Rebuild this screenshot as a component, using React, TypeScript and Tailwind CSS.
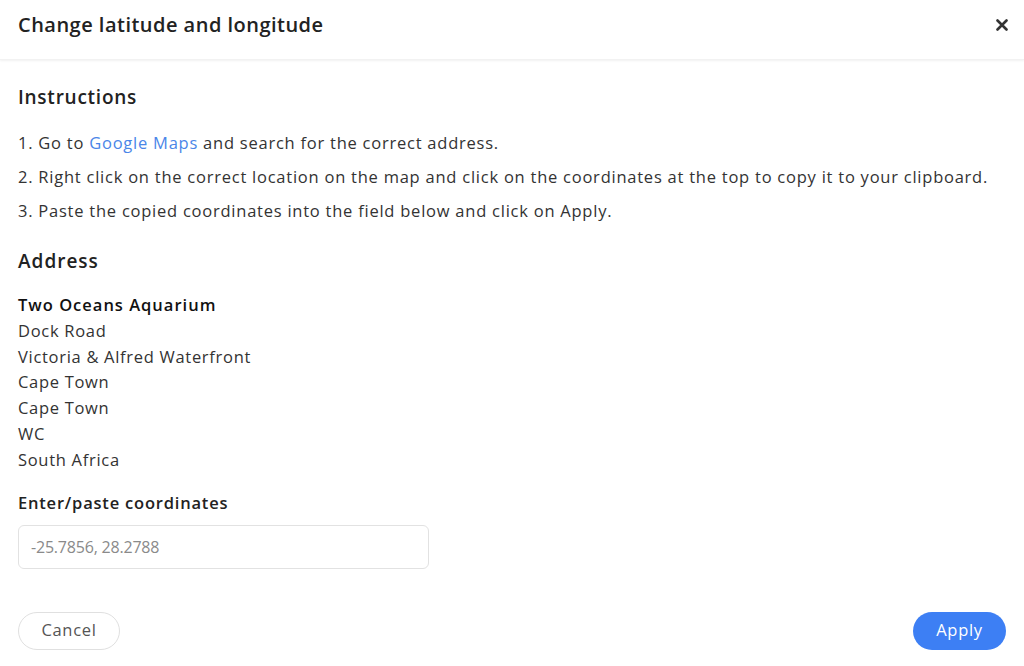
import React from "react";

export default function App() {
  const font = { fontFamily: '"Open Sans", "Liberation Sans", sans-serif' };
  return (
    <div className="w-[1024px] h-[666px] bg-white text-[#2b2b2b] overflow-hidden" style={font}>
      <div className="h-[60px] flex items-center justify-between pl-[18px] pr-[16px] shadow-[0_1px_2px_rgba(0,0,0,0.06)] border-b border-[#f2f2f2]">
        <h1 className="text-[20px] font-semibold text-[#222] tracking-[0.48px] -mt-[10px]">Change latitude and longitude</h1>
        <button className="-mt-[10px] text-[#333]">
          <svg width="12" height="12" viewBox="0 0 12 12">
            <path d="M1.5 1.5 L10.5 10.5 M10.5 1.5 L1.5 10.5" stroke="#333" strokeWidth="2.6" strokeLinecap="round" />
          </svg>
        </button>
      </div>
      <div className="px-[18px]">
        <h2 className="mt-[24px] text-[19px] font-semibold text-[#222] leading-[26px] tracking-[0.75px]">Instructions</h2>
        <ol className="mt-[16px] text-[16.5px] leading-[34px] text-[#333] tracking-[0.76px]">
          <li>1. Go to <span className="text-[#4a86e8]">Google Maps</span> and search for the correct address.</li>
          <li>2. Right click on the correct location on the map and click on the coordinates at the top to copy it to your clipboard.</li>
          <li>3. Paste the copied coordinates into the field below and click on Apply.</li>
        </ol>
        <h2 className="mt-[20px] text-[19px] font-semibold text-[#222] leading-[26px] tracking-[1px]">Address</h2>
        <div className="mt-[18px] text-[16.5px] leading-[25.8px] text-[#333] tracking-[0.7px]">
          <div className="font-semibold text-[#111] tracking-[1px]">Two Oceans Aquarium</div>
          <div>Dock Road</div>
          <div>Victoria &amp; Alfred Waterfront</div>
          <div>Cape Town</div>
          <div>Cape Town</div>
          <div>WC</div>
          <div>South Africa</div>
        </div>
        <div className="mt-[17px] text-[16.5px] font-semibold text-[#222] leading-[26px] tracking-[0.8px]">Enter/paste coordinates</div>
        <input
          className="mt-[9px] w-[411px] h-[44px] rounded-[6px] border border-[#e2e2e2] px-[12px] text-[16px] tracking-[-0.2px] placeholder-[#8a8a8a] outline-none"
          placeholder="-25.7856, 28.2788"
          style={font}
        />
        <div className="mt-[43px] flex items-center justify-between">
          <button className="h-[38px] w-[102px] rounded-full border border-[#e0e0e0] text-[16.5px] text-[#555] tracking-[0.7px]">Cancel</button>
          <button className="h-[38px] w-[93px] rounded-full bg-[#3d7ff4] text-[16.5px] text-white tracking-[0.7px]">Apply</button>
        </div>
      </div>
    </div>
  );
}
